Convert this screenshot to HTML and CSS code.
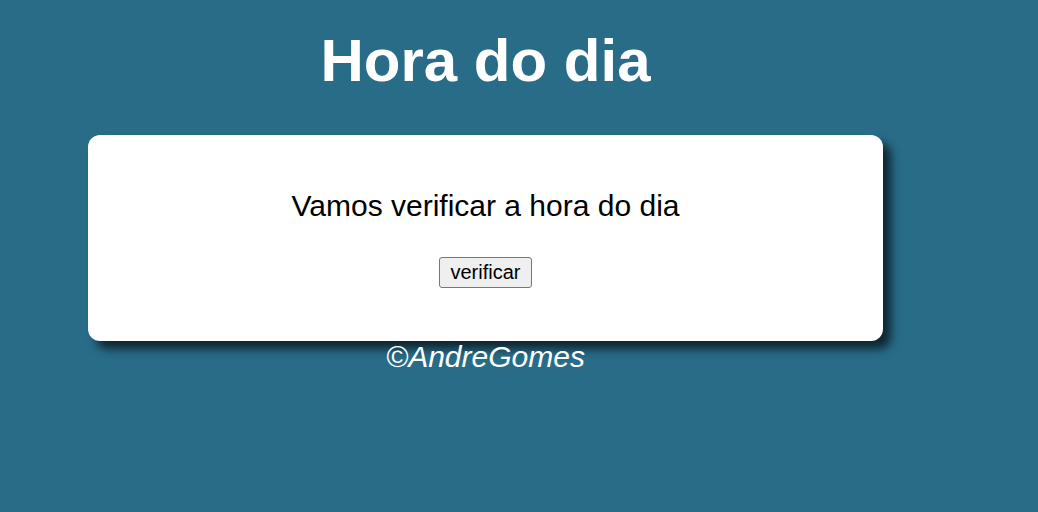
FILE: index.html
```html
<!DOCTYPE html>
<html lang="pt">
<head>
<meta charset="utf-8">
<title>Hora do dia</title>
<link rel="stylesheet" href="styles.css">
</head>
<body>
<main class="page">
  <header class="header">
    <h1 class="title">Hora do dia</h1>
  </header>
  <section class="card">
    <p class="msg">Vamos verificar a hora do dia</p>
    <button class="btn" type="button">verificar</button>
  </section>
  <footer class="footer">
    <p class="credit">&copy;AndreGomes</p>
  </footer>
</main>
</body>
</html>
```
FILE: styles.css
```css
html, body {
  margin: 0;
  padding: 0;
}
body {
  background: #286c88;
  font-family: "Liberation Sans", Arial, sans-serif;
  color: #000;
}
.page {
  width: 795px;
  margin-left: 88px;
  display: flex;
  flex-direction: column;
  padding-top: 26px;
}
.header {
  display: flex;
  justify-content: center;
}
.title {
  margin: 0;
  font-size: 60px;
  font-weight: bold;
  color: #fff;
  line-height: 69px;
}
.card {
  margin-top: 40px;
  background: #fff;
  border-radius: 12px;
  box-shadow: 8px 8px 10px rgba(0, 0, 0, 0.65);
  padding: 53px 0 53px;
  display: flex;
  flex-direction: column;
  align-items: center;
  gap: 34px;
}
.msg {
  margin: 0;
  font-size: 30px;
  line-height: 35px;
}
.btn {
  font-family: "Liberation Sans", Arial, sans-serif;
  font-size: 20px;
  line-height: 23px;
  padding: 3px 10px;
  border: 1px solid #767676;
  border-radius: 3px;
  background: #efefef;
  color: #000;
}
.footer {
  display: flex;
  justify-content: center;
  margin-top: -2px;
}
.credit {
  margin: 0;
  font-size: 30px;
  font-style: italic;
  color: #fff;
  line-height: 35px;
}
```
